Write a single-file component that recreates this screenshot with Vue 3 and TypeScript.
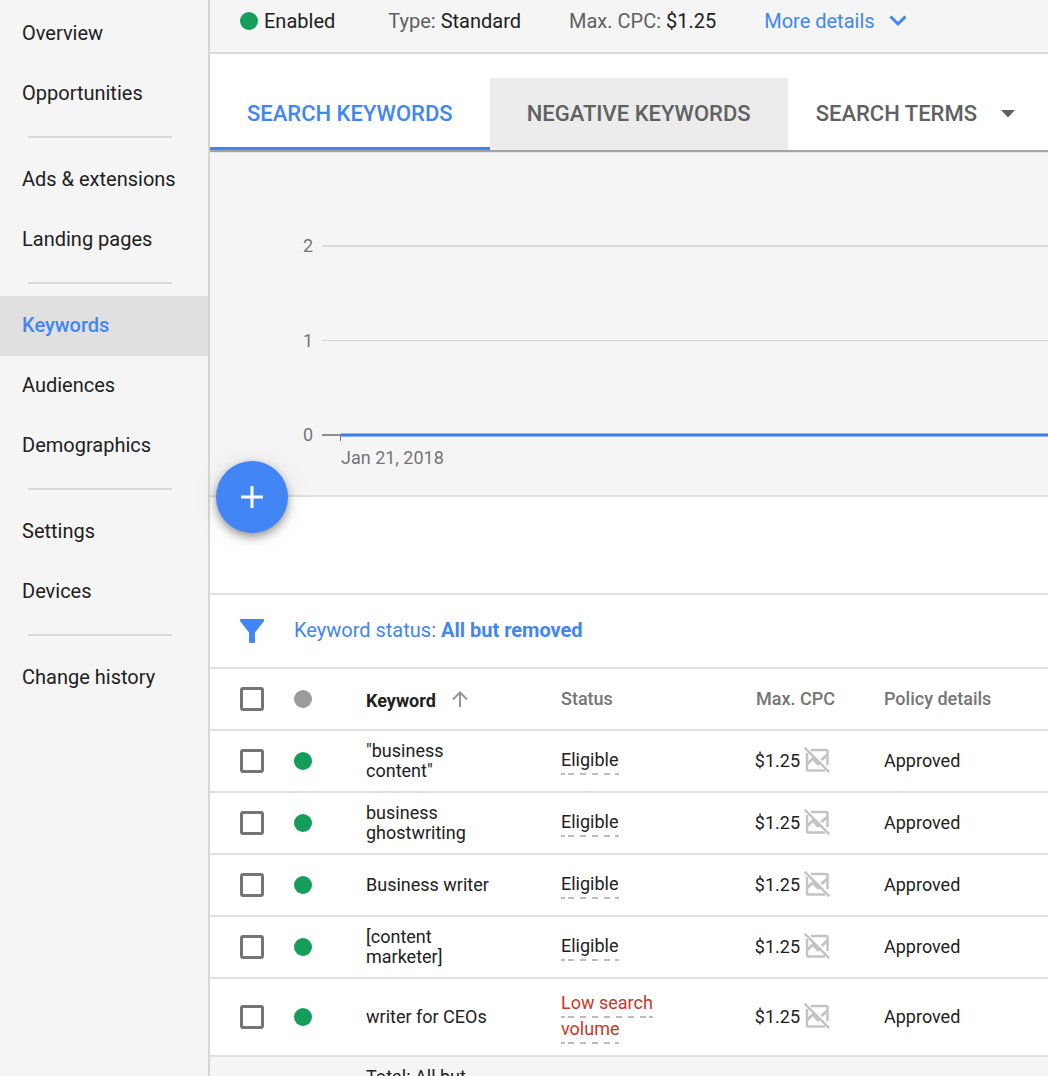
<script setup lang="ts">
interface KeywordRow {
  keyword: string
  status: string
  low?: boolean
  cpc: string
  policy: string
}

const navGroups: string[][] = [
  ['Overview', 'Opportunities'],
  ['Ads & extensions', 'Landing pages'],
  ['Keywords', 'Audiences', 'Demographics'],
  ['Settings', 'Devices'],
  ['Change history'],
]

const activeNav = 'Keywords'

const rows: KeywordRow[] = [
  { keyword: '"business content"', status: 'Eligible', cpc: '$1.25', policy: 'Approved' },
  { keyword: 'business ghostwriting', status: 'Eligible', cpc: '$1.25', policy: 'Approved' },
  { keyword: 'Business writer', status: 'Eligible', cpc: '$1.25', policy: 'Approved' },
  { keyword: '[content marketer]', status: 'Eligible', cpc: '$1.25', policy: 'Approved' },
  { keyword: 'writer for CEOs', status: 'Low search volume', low: true, cpc: '$1.25', policy: 'Approved' },
]
</script>

<template>
  <div class="app">
    <nav class="sidebar" aria-label="Campaign sections">
      <ul v-for="(group, g) in navGroups" :key="g" class="nav-group">
        <li v-for="item in group" :key="item">
          <a href="#" class="nav-item" :class="{ active: item === activeNav }">{{ item }}</a>
        </li>
      </ul>
    </nav>

    <main class="main">
      <header class="summary">
        <span class="enabled"><span class="dot"></span>Enabled</span>
        <span class="fact">Type: <b>Standard</b></span>
        <span class="fact">Max. CPC: <b>$1.25</b></span>
        <button type="button" class="more">
          More details
          <svg width="18" height="12" viewBox="0 0 18 12" aria-hidden="true">
            <path d="M1.5 1.5 9 9l7.500-7.500" fill="none" stroke="#4285f4" stroke-width="3" />
          </svg>
        </button>
      </header>

      <div class="tabs" role="tablist">
        <button type="button" role="tab" class="tab selected" aria-selected="true">SEARCH KEYWORDS</button>
        <button type="button" role="tab" class="tab hovered" aria-selected="false">NEGATIVE KEYWORDS</button>
        <button type="button" role="tab" class="tab menu" aria-selected="false">
          SEARCH TERMS
          <svg width="14" height="8" viewBox="0 0 14 8" aria-hidden="true"><path d="M0 0h14L7 7.500z" fill="#616161" /></svg>
        </button>
      </div>

      <section class="chart" aria-label="Performance chart">
        <svg class="plot" width="100%" height="345" aria-hidden="true">
          <rect x="112" y="95" width="100%" height="2" fill="#d9d9d9" />
          <rect x="112" y="190" width="100%" height="1" fill="#d6d6d6" />
          <rect x="112" y="284" width="19" height="2" fill="#8e8e8e" />
          <rect x="130" y="285" width="1" height="6" fill="#757575" />
          <rect x="131" y="283" width="100%" height="4" fill="#8db4f8" />
          <rect x="131" y="284" width="100%" height="2" fill="#3b7cf0" />
          <text x="103" y="102" text-anchor="end">2</text>
          <text x="103" y="197" text-anchor="end">1</text>
          <text x="103" y="291" text-anchor="end">0</text>
          <text x="131" y="314">Jan 21, 2018</text>
        </svg>
      </section>

      <div class="toolbar">
        <button type="button" class="fab" aria-label="Add keywords">
          <svg width="22" height="22" viewBox="0 0 22 22" aria-hidden="true">
            <path d="M11 0v22M0 11h22" stroke="#fff" stroke-width="3" />
          </svg>
        </button>
      </div>

      <div class="filter">
        <svg width="24" height="24" viewBox="0 0 24 24" aria-hidden="true">
          <path d="M1 0h22q1 0 1 1v1L15 13.500V23q0 1-1 1h-4q-1 0-1-1v-9.500L0 2V1q0-1 1-1z" fill="#4285f4" />
        </svg>
        <button type="button" class="filter-chip">Keyword status: <b>All but removed</b></button>
      </div>

      <table class="keywords">
        <colgroup>
          <col class="c-check" />
          <col class="c-dot" />
          <col class="c-keyword" />
          <col class="c-status" />
          <col class="c-cpc" />
          <col class="c-policy" />
        </colgroup>
        <thead>
          <tr>
            <th class="check"><input type="checkbox" aria-label="Select all keywords" /></th>
            <th><span class="dot grey"></span></th>
            <th class="sorted">
              <span class="sort">
                Keyword
                <svg width="16" height="16" viewBox="0 0 16 16" aria-hidden="true">
                  <path d="M8 16V1.500M1 8.500l7-7 7 7" fill="none" stroke="#949494" stroke-width="2" />
                </svg>
              </span>
            </th>
            <th>Status</th>
            <th class="num">Max. CPC</th>
            <th class="policy">Policy details</th>
          </tr>
        </thead>
        <tbody>
          <tr v-for="row in rows" :key="row.keyword" :class="{ tall: row.low }">
            <td class="check"><input type="checkbox" :aria-label="'Select ' + row.keyword" /></td>
            <td><span class="dot"></span></td>
            <td class="keyword">{{ row.keyword }}</td>
            <td class="status"><span class="state" :class="{ low: row.low }">{{ row.status }}</span></td>
            <td class="num">
              <span class="bid">
                {{ row.cpc }}
                <svg width="26" height="26" viewBox="0 0 26 26" fill="none" stroke="#c4c4c4" stroke-width="2" aria-hidden="true">
                  <path d="M7 3h15q1.500 0 1.500 1.500v13.500" stroke-width="2.500" />
                  <path d="M3 6v16.500q0 1 1 1h17" stroke-width="2.500" />
                  <path d="M3 17l6-5.500 5 5.500 3-1.500M17.500 13l6-5.500" stroke-width="3" />
                  <path d="M.8.8l24.400 24.400" stroke-width="2.500" />
                </svg>
              </span>
            </td>
            <td class="policy">{{ row.policy }}</td>
          </tr>
        </tbody>
        <tfoot>
          <tr>
            <td></td>
            <td></td>
            <td class="keyword">Total: All but removed</td>
            <td></td>
            <td></td>
            <td></td>
          </tr>
        </tfoot>
      </table>
    </main>
  </div>
</template>

<style>
body {
  margin: 0;
  background: #f5f5f5;
}
</style>

<style scoped>
.app {
  display: flex;
  height: 100vh;
  overflow: hidden;
  font-family: Roboto, "Liberation Sans", sans-serif;
  font-size: 20px;
  color: #212121;
  background: #f5f5f5;
}

button {
  margin: 0;
  padding: 0;
  border: 0;
  background: none;
  font: inherit;
  color: inherit;
  cursor: pointer;
}

b {
  font-weight: 700;
}

.sidebar {
  flex: 0 0 208px;
  padding-top: 4px;
  border-right: 2px solid #d6d6d6;
}

.nav-group {
  margin: 0;
  padding: 0;
  list-style: none;
}

.nav-group + .nav-group::before {
  content: "";
  display: block;
  height: 2px;
  margin: 12px 36px 12px 28px;
  background: #d9d9d9;
}

.nav-item {
  display: block;
  padding-left: 22px;
  line-height: 58px;
  padding-bottom: 2px;
  color: #212121;
  text-decoration: none;
}

.nav-item.active {
  background: #e0e0e0;
  color: #4285f4;
  font-weight: 500;
}

.main {
  flex: 1;
  min-width: 0;
}

.summary {
  display: flex;
  align-items: center;
  height: 42px;
  padding: 0 30px 10px;
  border-bottom: 2px solid #dadada;
  white-space: nowrap;
}

.enabled {
  display: flex;
  align-items: center;
  gap: 6px;
  margin-right: 53px;
}

.fact {
  margin-right: 48px;
  color: #616161;
}

.fact b {
  font-weight: 400;
  color: #212121;
}

.more {
  display: flex;
  align-items: center;
  gap: 14px;
  color: #4285f4;
}

.dot {
  display: block;
  width: 18px;
  height: 18px;
  border-radius: 50%;
  background: #149e5a;
}

.dot.grey {
  background: #9b9b9b;
}

.tabs {
  position: relative;
  display: flex;
  padding-top: 24px;
  background: #fff;
  box-shadow: 0 2px 1px #a4a4a4;
  white-space: nowrap;
}

.tab {
  height: 72px;
  padding: 0 37px 2px;
  font-size: 22px;
  font-weight: 500;
  color: #616161;
}

.tab.selected {
  border-bottom: 3px solid #4285f4;
  padding-top: 1px;
  padding-bottom: 0;
  color: #4285f4;
}

.tab.hovered {
  background: #ececec;
}

.tab.menu {
  display: flex;
  align-items: center;
  gap: 24px;
  padding: 0 28px 2px;
}

.tab.menu svg {
  margin-top: 2px;
}

.chart {
  height: 345px;
  border-bottom: 2px solid #e0e0e0;
}

.plot {
  display: block;
}

.plot text {
  font-size: 18px;
  fill: #757575;
}

.toolbar {
  position: relative;
  height: 96px;
  border-bottom: 2px solid #e0e0e0;
  background: #fff;
}

.fab {
  position: absolute;
  top: -36px;
  left: 6px;
  display: flex;
  align-items: center;
  justify-content: center;
  width: 72px;
  height: 72px;
  border-radius: 50%;
  background: #4285f4;
  box-shadow: 0 4px 8px rgba(0, 0, 0, 0.36), 0 2px 24px rgba(0, 0, 0, 0.1);
}

.filter {
  display: flex;
  align-items: center;
  gap: 30px;
  height: 72px;
  padding-left: 30px;
  border-bottom: 2px solid #e0e0e0;
  background: #fff;
  color: #4285f4;
}

.filter-chip {
  padding-bottom: 2px;
}

.keywords {
  width: 100%;
  table-layout: fixed;
  border-collapse: separate;
  border-spacing: 0;
  font-size: 18px;
  line-height: 20px;
}

.c-check {
  width: 84px;
}

.c-dot {
  width: 72px;
}

.c-keyword {
  width: 195px;
}

.c-status {
  width: 150px;
}

.c-cpc {
  width: 124px;
}

th,
td {
  box-sizing: border-box;
  height: 62px;
  padding: 0;
  border-bottom: 2px solid #e0e0e0;
  background: #fff;
  text-align: left;
  vertical-align: middle;
}

th {
  font-weight: 500;
  color: #757575;
}

.tall td {
  height: 78px;
}

.check {
  padding-left: 30px;
}

.check input {
  appearance: none;
  display: block;
  box-sizing: border-box;
  width: 24px;
  height: 24px;
  margin: 0;
  border: 3px solid #757575;
  border-radius: 3px;
}

.sorted {
  padding-top: 3px;
  color: #212121;
  font-weight: 700;
}

.sort {
  display: flex;
  align-items: center;
  gap: 16px;
}

.sort svg {
  margin-bottom: 3px;
}

td.keyword {
  padding-right: 70px;
}

td.status {
  padding-right: 40px;
  padding-bottom: 2px;
}

.state {
  padding-bottom: 5px;
  background:
    linear-gradient(#bdbdbd, #bdbdbd) left bottom / 4px 2px no-repeat,
    linear-gradient(#bdbdbd, #bdbdbd) right bottom / 4px 2px no-repeat,
    linear-gradient(90deg, #bdbdbd 6px, transparent 6px) 7px 100% / 12px 2px repeat-x;
  box-decoration-break: clone;
  -webkit-box-decoration-break: clone;
  line-height: 26px;
}

.state.low {
  color: #c5392b;
}

.num {
  text-align: right;
}

.bid {
  display: flex;
  align-items: center;
  justify-content: flex-end;
  gap: 4px;
  padding-right: 5px;
}

.bid svg {
  margin-bottom: 2px;
}

.policy {
  padding-left: 49px;
}

tfoot td {
  height: 100px;
  padding-top: 10px;
  border-bottom: 0;
  background: #f5f5f5;
  vertical-align: top;
}
</style>
